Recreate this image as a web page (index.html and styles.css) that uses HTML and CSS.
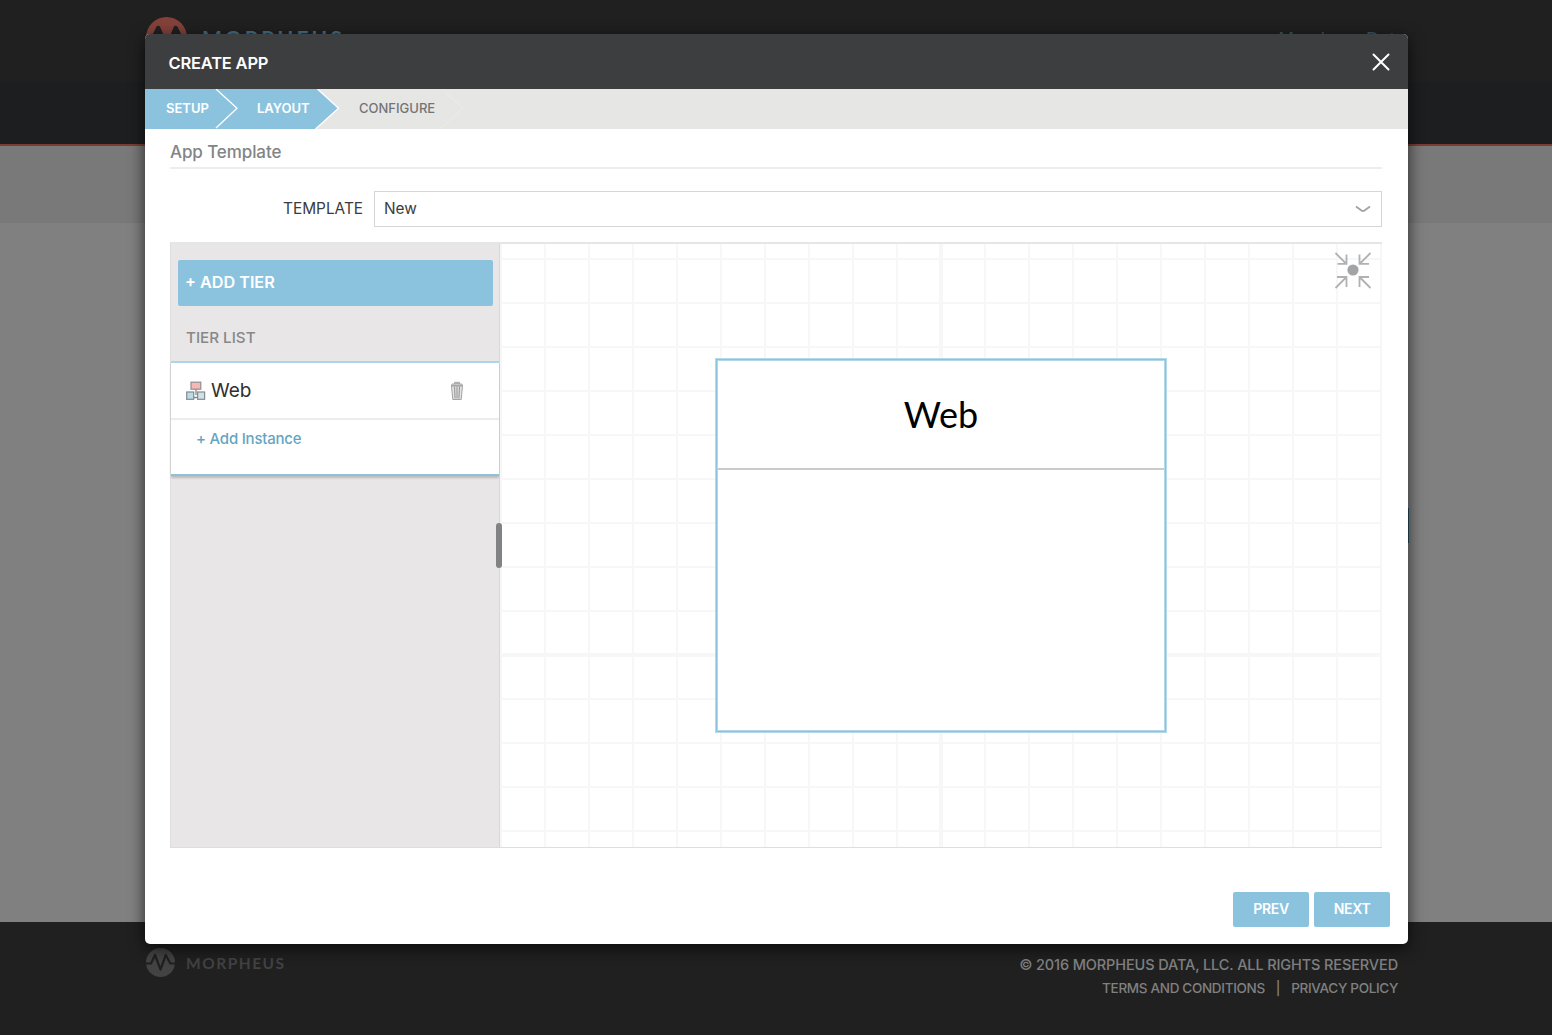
FILE: index.html
```html
<!DOCTYPE html>
<html lang="en">
<head>
<meta charset="utf-8">
<title>Create App</title>
<link rel="stylesheet" href="styles.css">
</head>
<body>
<div class="page">
  <header class="top">
    <div class="brand">
      <svg class="mark" viewBox="0 0 42 42"><circle cx="20.500" cy="20.500" r="20.500" fill="#84413a"/><path d="M0 24h6l6.300-13 8.700 21 8.700-21 6.300 13h6" fill="none" stroke="#202020" stroke-width="4.500" stroke-linejoin="round"/></svg>
      <span class="brand-name">MORPHEUS</span>
    </div>
    <span class="account">Morpheus Data</span>
  </header>
  <nav class="nav"></nav>
  <div class="band"></div>
  <main class="content"></main>
  <footer class="footer">
    <div class="foot-brand">
      <svg class="foot-mark" viewBox="0 0 30 30"><circle cx="14.500" cy="14.500" r="14.500" fill="#434343"/><path d="M0 15.500h5l4-8.500 5.500 14.500 5.300-14.500 4.500 8.500H30" fill="none" stroke="#202020" stroke-width="2.200" stroke-linejoin="round"/></svg>
      <span class="foot-name">MORPHEUS</span>
    </div>
    <div class="legal">
      <span class="copy">© 2016 MORPHEUS DATA, LLC. ALL RIGHTS RESERVED</span>
      <div class="links"><span>TERMS AND CONDITIONS</span><span>|</span><span>PRIVACY POLICY</span></div>
    </div>
  </footer>
</div>
<div class="page-action"></div>
<section class="modal">
  <header class="modal-head">
    <h1 class="modal-title">CREATE APP</h1>
    <svg class="close" viewBox="0 0 18 18"><path d="M1.500 1.500l15 15m0-15l-15 15" stroke="#fff" stroke-width="2" stroke-linecap="round"/></svg>
  </header>
  <div class="steps">
    <svg class="steps-bg" viewBox="0 0 330 40"><path d="M0 0h172.500l21 19.300L170.500 40H0z" fill="#8bc3df"/><path d="M71 0l21 19.300L71 39M172.500 0l21 19.300-23 20.700" fill="none" stroke="#fff" stroke-width="1.300"/><path d="M297 0l21 19.300L296 39" fill="none" stroke="#ececea" stroke-width="1"/></svg>
    <span class="step setup">SETUP</span><span class="step layout">LAYOUT</span><span class="step configure">CONFIGURE</span>
  </div>
  <div class="modal-body">
    <h2 class="section"><span>App Template</span></h2>
    <div class="field">
      <label class="label">TEMPLATE</label>
      <div class="select"><span class="value">New</span><svg class="chev" viewBox="0 0 16 8"><path d="M1 1.500l5.500 4q1.500 1 3 0l5.500-4" fill="none" stroke="#a0a2a3" stroke-width="1.800"/></svg></div>
    </div>
    <div class="builder">
      <aside class="tiers">
        <button class="add-tier"><span>+ ADD TIER</span></button>
        <div class="tier-label"><span>TIER LIST</span></div>
        <div class="tier">
          <div class="tier-row">
            <svg class="tier-icon" viewBox="0 0 20 20"><path d="M10 8v6M7 16.500h6" stroke="#888" stroke-width="1.300"/><rect x="5" y="1.200" width="9.800" height="7" fill="#f5b8b5" stroke="#8f8f8f" stroke-width="1.200"/><rect x=".7" y="11" width="7" height="7.300" fill="#b9dcea" stroke="#858b8e" stroke-width="1.200"/><rect x="11.600" y="11" width="7" height="7.300" fill="#cfe2e8" stroke="#858b8e" stroke-width="1.200"/></svg>
            <span class="tier-name">Web</span>
            <svg class="trash" viewBox="0 0 14 20"><path d="M4.500 3V1.300h5V3M1 4.500Q1 2.600 7 2.600t6 1.900z" fill="#d0d0d0" stroke="#a8a8a8"/><path d="M1.500 5h11l-1.300 13.500H2.800z" fill="#e2e2e2" stroke="#a4a4a4"/><path d="M4.500 5.500l.6 12M7 5.500v12M9.500 5.500l-.6 12" stroke="#999" stroke-width="1.100"/></svg>
          </div>
          <div class="add-instance"><span>+ Add Instance</span></div>
        </div>
        <i class="handle"></i>
      </aside>
      <div class="canvas">
        <svg class="collapse" viewBox="0 0 38 38"><circle cx="19" cy="19" r="5.600" fill="#a3a4a6"/><g fill="none" stroke="#b0b1b2" stroke-width="1.800"><path d="M1.500 2L12 12.500M12.500 3.500v9.300H3.500"/><path d="M36.500 2L26 12.500M25.500 3.500v9.300h9.500M1.500 37L12 26.500M12.500 36v-10H3M36.500 37L26 26.500M25.500 36v-10h9.500"/></g></svg>
        <div class="node"><div class="node-title"><span>Web</span></div></div>
      </div>
    </div>
    <div class="actions"><button class="btn"><span>PREV</span></button><button class="btn"><span>NEXT</span></button></div>
  </div>
</section>
</body>
</html>
```
FILE: styles.css
```css
* { box-sizing: border-box; margin: 0; }
body { width: 1552px; height: 1035px; overflow: hidden; position: relative; font-family: Inter, sans-serif; font-weight: 500; background: #808080; }
svg { display: block; }
button { border: 0; font: inherit; }
.page { height: 1035px; display: flex; flex-direction: column; }
.top { height: 82px; background: #202020; display: flex; justify-content: space-between; padding: 17px 147px 0 146px; }
.brand { display: flex; gap: 14px; }
.mark { width: 42px; height: 42px; }
.brand-name { font: 700 21px/42px Lato, sans-serif; letter-spacing: 3px; color: #427085; }
.account { font: 400 18.500px/44px "Liberation Sans", sans-serif; color: #35596c; }
.nav { height: 62px; background: #1d1e20; }
.band { height: 79px; background: #797979; border-top: 2px solid #7b3c33; border-bottom: 1px solid #777; }
.content { flex: 1; background: #808080; }
.footer { height: 113px; background: #202020; display: flex; justify-content: space-between; padding: 26px 154px 0 146px; }
.foot-brand { display: flex; gap: 10px; height: 30px; align-items: center; }
.foot-mark { width: 30px; height: 30px; }
.foot-name { font: 700 15.500px/30px Lato, sans-serif; letter-spacing: 1.500px; color: #424242; }
.legal { display: flex; flex-direction: column; align-items: flex-end; color: #808080; padding-top: 5px; }
.copy { font-size: 14.500px; line-height: 23px; letter-spacing: -.12px; }
.links { display: flex; gap: 11px; font-size: 13.500px; line-height: 24px; letter-spacing: -.32px; }
.page-action { position: absolute; left: 1300px; top: 508px; width: 109px; height: 35px; background: #264b63; }
.modal { position: absolute; left: 145px; top: 34px; width: 1263px; height: 910px; background: #fff; border-radius: 5px; box-shadow: 0 4px 16px rgba(0,0,0,.7); display: flex; flex-direction: column; }
.modal-head { height: 55px; background: #3d3e40; border-radius: 5px 5px 0 0; display: flex; justify-content: space-between; align-items: center; padding: 1px 18px 0 23.500px; }
.modal-title { font-size: 16.500px; font-weight: 600; letter-spacing: -.2px; color: #fff; padding-top: 2px; }
.close { width: 18px; height: 18px; }
.steps { height: 40px; background: #e6e6e4; display: grid; grid-template-columns: 91px 102px 1fr; align-items: center; padding-left: 21px; font-size: 13px; }
.steps > * { grid-row: 1; }
.steps-bg { grid-column: 1 / -1; width: 330px; height: 40px; margin-left: -21px; }
.step { z-index: 1; line-height: 38px; align-self: start; }
.setup { grid-column: 1; color: #fff; font-weight: 600; }
.layout { grid-column: 2; color: #fff; font-weight: 600; }
.configure { grid-column: 3; color: #727476; }
.modal-body { flex: 1; display: flex; flex-direction: column; padding: 0 26px 0 25px; }
.section { height: 40px; border-bottom: 2px solid #ededed; font-size: 17px; letter-spacing: -.1px; font-weight: 500; line-height: 47px; color: #828486; }
.field { display: flex; justify-content: space-between; align-items: center; height: 36px; margin-top: 22px; padding-left: 113px; font-size: 15.400px; color: #3c3c3e; font-weight: 400; }
.label { padding-bottom: 2px; }
.select { width: 1008px; height: 36px; border: 1px solid #d6d6d6; display: flex; justify-content: space-between; align-items: center; padding: 0 10px 1px 9px; }
.chev { width: 16px; height: 8px; }
.builder { display: flex; height: 606px; margin-top: 15px; border: solid #dedede; border-width: 2px 0 1px 1px; border-top-color: #e6e6e6; }
.tiers { position: relative; width: 329px; background: #e8e6e7; border-right: 1px solid #d8d8d8; display: flex; flex-direction: column; }
.add-tier { margin: 16px 6px 0 7px; height: 46px; border-radius: 2px; background: #8bc3df; color: #fff; text-align: left; padding: 0 7px 2px; font-size: 16.200px; font-weight: 600; line-height: 44px; }
.tier-label { height: 55px; padding-left: 15px; font-size: 15.200px; line-height: 64px; color: #868889; }
.tier { height: 115px; background: #fff; border-top: 2px solid #a9d6ea; border-bottom: 2px solid #8fc1d9; box-shadow: 0 2px 2px #bbb; }
.tier-row { display: flex; align-items: center; height: 57px; border-bottom: 2px solid #ececec; padding: 0 35px 0 15px; }
.tier-icon { width: 20px; height: 20px; }
.tier-name { flex: 1; padding: 0 0 0 5px; font-size: 19px; font-weight: 400; color: #303030; line-height: 53px; }
.trash { width: 14px; height: 20px; }
.add-instance { padding-left: 25px; font-size: 15px; letter-spacing: -.22px; line-height: 38px; color: #65a5c2; }
.handle { position: absolute; left: 325px; top: 279px; width: 6px; height: 45px; border-radius: 3px; background: #808284; z-index: 2; }
.canvas { flex: 1; position: relative; background:
 linear-gradient(#f7f7f7,#f7f7f7) 439px 0/4px 100% no-repeat,
 linear-gradient(#f7f7f7,#f7f7f7) 0 409px/100% 4px no-repeat,
 linear-gradient(90deg,#f7f7f7 2px,transparent 2px) 44px 0/44px 44px,
 linear-gradient(#f7f7f7 2px,transparent 2px) 0 14px/44px 44px; }
.collapse { position: absolute; right: 10px; top: 7px; width: 38px; height: 38px; }
.node { position: absolute; left: 215px; top: 114px; width: 452px; height: 375px; padding: 2px; background: #fff; border: 1px solid #b4daea; box-shadow: inset 0 0 0 1px #8bc3df, inset 0 0 0 2px #b0d8ea; }
.node-title { height: 110px; margin-top: -1px; border-bottom: 2px solid #cacaca; text-align: center; font-family: Lato, sans-serif; font-weight: 400; font-size: 36px; line-height: 108px; color: #000; }
.actions { display: flex; justify-content: flex-end; gap: 5px; margin: 44px -8px 0 0; }
.btn { width: 76px; height: 35px; padding: 0 0 2px; border-radius: 2px; background: #8bc3df; color: #fff; font-size: 14px; font-weight: 600; letter-spacing: -.3px; }
```
